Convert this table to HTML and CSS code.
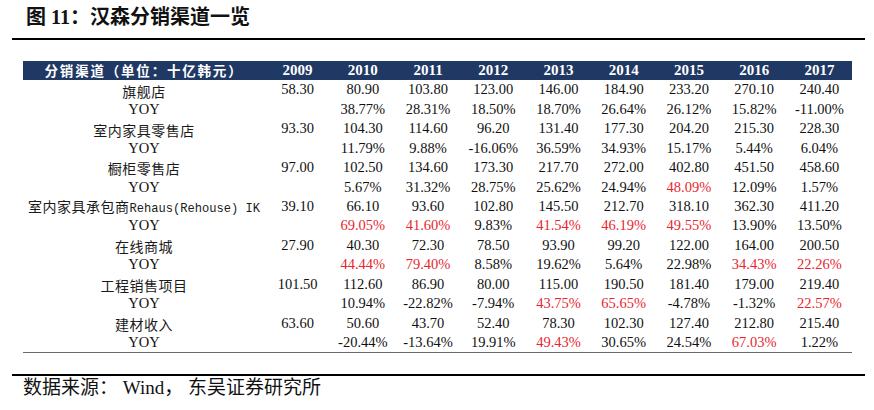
FILE: index.html
```html
<!DOCTYPE html>
<html lang="zh-CN">
<head>
<meta charset="utf-8">
<link rel="stylesheet" href="styles.css">
</head>
<body>
<div class="page">
  <div class="title">图 11：汉森分销渠道一览</div>
  <div class="rule"></div>
  <div class="table">
    <div class="row head">
      <div class="cell hlabel">分销渠道（单位：十亿韩元）</div>
      <div class="cell">2009</div><div class="cell">2010</div><div class="cell">2011</div><div class="cell">2012</div><div class="cell">2013</div><div class="cell">2014</div><div class="cell">2015</div><div class="cell">2016</div><div class="cell">2017</div>
    </div>
    <div class="row">
      <div class="cell label">旗舰店</div>
      <div class="cell">58.30</div><div class="cell">80.90</div><div class="cell">103.80</div><div class="cell">123.00</div><div class="cell">146.00</div><div class="cell">184.90</div><div class="cell">233.20</div><div class="cell">270.10</div><div class="cell">240.40</div>
    </div>
    <div class="row">
      <div class="cell yoy">YOY</div>
      <div class="cell"></div><div class="cell">38.77%</div><div class="cell">28.31%</div><div class="cell">18.50%</div><div class="cell">18.70%</div><div class="cell">26.64%</div><div class="cell">26.12%</div><div class="cell">15.82%</div><div class="cell">-11.00%</div>
    </div>
    <div class="row">
      <div class="cell label">室内家具零售店</div>
      <div class="cell">93.30</div><div class="cell">104.30</div><div class="cell">114.60</div><div class="cell">96.20</div><div class="cell">131.40</div><div class="cell">177.30</div><div class="cell">204.20</div><div class="cell">215.30</div><div class="cell">228.30</div>
    </div>
    <div class="row">
      <div class="cell yoy">YOY</div>
      <div class="cell"></div><div class="cell">11.79%</div><div class="cell">9.88%</div><div class="cell">-16.06%</div><div class="cell">36.59%</div><div class="cell">34.93%</div><div class="cell">15.17%</div><div class="cell">5.44%</div><div class="cell">6.04%</div>
    </div>
    <div class="row">
      <div class="cell label">橱柜零售店</div>
      <div class="cell">97.00</div><div class="cell">102.50</div><div class="cell">134.60</div><div class="cell">173.30</div><div class="cell">217.70</div><div class="cell">272.00</div><div class="cell">402.80</div><div class="cell">451.50</div><div class="cell">458.60</div>
    </div>
    <div class="row">
      <div class="cell yoy">YOY</div>
      <div class="cell"></div><div class="cell">5.67%</div><div class="cell">31.32%</div><div class="cell">28.75%</div><div class="cell">25.62%</div><div class="cell">24.94%</div><div class="cell up">48.09%</div><div class="cell">12.09%</div><div class="cell">1.57%</div>
    </div>
    <div class="row">
      <div class="cell label">室内家具承包商<span class="mono">Rehaus(Rehouse) IK</span></div>
      <div class="cell">39.10</div><div class="cell">66.10</div><div class="cell">93.60</div><div class="cell">102.80</div><div class="cell">145.50</div><div class="cell">212.70</div><div class="cell">318.10</div><div class="cell">362.30</div><div class="cell">411.20</div>
    </div>
    <div class="row">
      <div class="cell yoy">YOY</div>
      <div class="cell"></div><div class="cell up">69.05%</div><div class="cell up">41.60%</div><div class="cell">9.83%</div><div class="cell up">41.54%</div><div class="cell up">46.19%</div><div class="cell up">49.55%</div><div class="cell">13.90%</div><div class="cell">13.50%</div>
    </div>
    <div class="row">
      <div class="cell label">在线商城</div>
      <div class="cell">27.90</div><div class="cell">40.30</div><div class="cell">72.30</div><div class="cell">78.50</div><div class="cell">93.90</div><div class="cell">99.20</div><div class="cell">122.00</div><div class="cell">164.00</div><div class="cell">200.50</div>
    </div>
    <div class="row">
      <div class="cell yoy">YOY</div>
      <div class="cell"></div><div class="cell up">44.44%</div><div class="cell up">79.40%</div><div class="cell">8.58%</div><div class="cell">19.62%</div><div class="cell">5.64%</div><div class="cell">22.98%</div><div class="cell up">34.43%</div><div class="cell up">22.26%</div>
    </div>
    <div class="row">
      <div class="cell label">工程销售项目</div>
      <div class="cell">101.50</div><div class="cell">112.60</div><div class="cell">86.90</div><div class="cell">80.00</div><div class="cell">115.00</div><div class="cell">190.50</div><div class="cell">181.40</div><div class="cell">179.00</div><div class="cell">219.40</div>
    </div>
    <div class="row">
      <div class="cell yoy">YOY</div>
      <div class="cell"></div><div class="cell">10.94%</div><div class="cell">-22.82%</div><div class="cell">-7.94%</div><div class="cell up">43.75%</div><div class="cell up">65.65%</div><div class="cell">-4.78%</div><div class="cell">-1.32%</div><div class="cell up">22.57%</div>
    </div>
    <div class="row">
      <div class="cell label">建材收入</div>
      <div class="cell">63.60</div><div class="cell">50.60</div><div class="cell">43.70</div><div class="cell">52.40</div><div class="cell">78.30</div><div class="cell">102.30</div><div class="cell">127.40</div><div class="cell">212.80</div><div class="cell">215.40</div>
    </div>
    <div class="row">
      <div class="cell yoy">YOY</div>
      <div class="cell"></div><div class="cell">-20.44%</div><div class="cell">-13.64%</div><div class="cell">19.91%</div><div class="cell up">49.43%</div><div class="cell">30.65%</div><div class="cell">24.54%</div><div class="cell up">67.03%</div><div class="cell">1.22%</div>
    </div>
  </div>
  <div class="rule bottom"></div>
  <div class="source">数据来源： Wind， 东吴证券研究所</div>
</div>
</body>
</html>
```

FILE: styles.css
```css
html, body {
  margin: 0;
  padding: 0;
  background: #ffffff;
}

body {
  font-family: "Liberation Serif", "Noto Sans CJK SC", serif;
  color: #111111;
}

.page {
  width: 853px;
  margin-left: 12px;
  padding-top: 5px;
}

.title {
  margin: 0 0 9px 14px;
  font-family: "Liberation Serif", "Noto Sans CJK SC", serif;
  font-size: 20px;
  line-height: 24px;
  font-weight: bold;
  color: #111111;
}

.rule {
  height: 2px;
  background: #000000;
}

.table {
  margin: 21px 0 21px 11px;
  width: 829px;
  border-bottom: 1px solid #6a6a6a;
}

.row {
  display: grid;
  grid-template-columns: 242px repeat(9, 1fr);
  align-items: center;
  height: 19.43px;
  font-size: 14.5px;
}

.row.head {
  height: 19px;
  background: #1f3864;
  color: #ffffff;
  font-weight: bold;
  font-size: 15px;
}

.cell {
  text-align: center;
  white-space: nowrap;
  line-height: 1;
}

.hlabel {
  font-family: "Noto Sans CJK SC", sans-serif;
  font-size: 13.5px;
  letter-spacing: 1.8px;
  font-weight: bold;
}

.label {
  padding-top: 2px;
  font-family: "Noto Sans CJK SC", sans-serif;
  font-size: 14px;
  letter-spacing: 0.5px;
  font-weight: 400;
  color: #1a1a1a;
}

.mono {
  font-family: "Liberation Mono", monospace;
  font-size: 12.1px;
  letter-spacing: 0;
}

.yoy {
  font-size: 14.5px;
}

.up {
  color: #e8262f;
}

.source {
  margin: 2px 0 0 11px;
  font-family: "Liberation Serif", "Noto Sans CJK SC", serif;
  font-size: 19px;
  line-height: 20px;
  color: #111111;
}
```
